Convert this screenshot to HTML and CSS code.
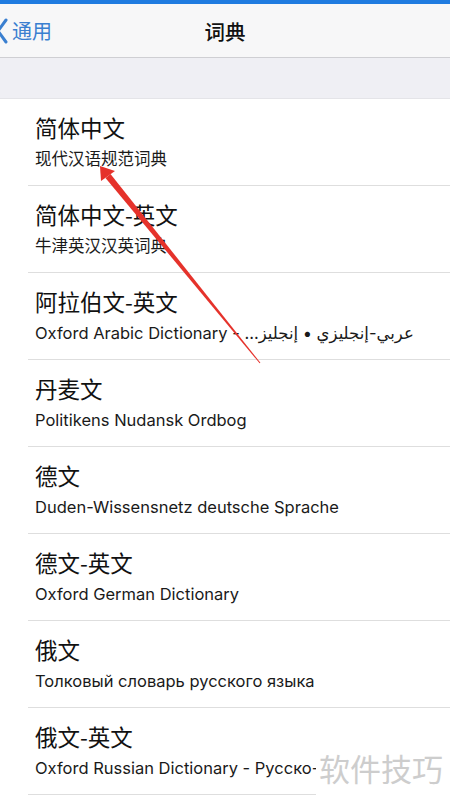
FILE: index.html
```html
<!DOCTYPE html>
<html lang="zh-CN">
<head>
<meta charset="utf-8">
<title>词典</title>
<link rel="stylesheet" href="styles.css">
</head>
<body>
<div class="page">
  <div class="statusbar"></div>
  <header class="nav">
    <div class="back">
      <svg class="chev" width="9" height="26" viewBox="0 0 9 26"><polyline points="6,2 -2,13 6,24" fill="none" stroke="#3a7fd0" stroke-width="3" stroke-linecap="round" stroke-linejoin="round"/></svg>
      <span>通用</span>
    </div>
    <div class="title">词典</div>
  </header>
  <div class="gap"></div>
  <ul class="list">
    <li class="row"><div class="t">简体中文</div><div class="s">现代汉语规范词典</div></li>
    <li class="row"><div class="t">简体中文-英文</div><div class="s">牛津英汉汉英词典</div></li>
    <li class="row"><div class="t">阿拉伯文-英文</div><div class="s">Oxford Arabic Dictionary - عربي-إنجليزي • إنجليز...&#x200F;</div></li>
    <li class="row"><div class="t">丹麦文</div><div class="s">Politikens Nudansk Ordbog</div></li>
    <li class="row"><div class="t">德文</div><div class="s">Duden-Wissensnetz deutsche Sprache</div></li>
    <li class="row"><div class="t">德文-英文</div><div class="s">Oxford German Dictionary</div></li>
    <li class="row"><div class="t">俄文</div><div class="s">Толковый словарь русского языка</div></li>
    <li class="row last"><div class="t">俄文-英文</div><div class="s">Oxford Russian Dictionary - Русско-</div></li>
  </ul>
  <svg class="arrow" width="450" height="801" viewBox="0 0 450 801">
    <polygon points="100,166 101,181 115,171" fill="#e5322b"/>
    <polygon points="110.5,174 105.5,178 259.6,363.3 260.4,362.7" fill="#e5322b"/>
  </svg>
  <div class="watermark">软件技巧</div>
</div>
</body>
</html>
```
FILE: styles.css
```css
* { box-sizing: border-box; }
html, body { margin: 0; padding: 0; background: #fff; }
body {
  font-family: Inter, "Noto Sans CJK SC", "DejaVu Sans", sans-serif;
  color: #111;
  overflow: hidden;
}
.page { position: relative; width: 450px; height: 801px; overflow: hidden; }
.statusbar { height: 4px; background: #1f7be0; }
.nav {
  height: 54px;
  background: #f7f7f8;
  border-bottom: 1px solid #cfcfd3;
  display: flex;
  align-items: center;
  justify-content: center;
  position: relative;
}
.back {
  position: absolute;
  left: 0;
  top: 0;
  bottom: 0;
  display: flex;
  align-items: center;
  gap: 3px;
  color: #3a7fd0;
  font-size: 20px;
  font-family: "Noto Sans CJK SC", sans-serif;
}
.chev { display: block; }
.title {
  font-family: "Noto Sans CJK SC", sans-serif;
  font-size: 20.5px;
  font-weight: 500;
  color: #111;
}
.gap { height: 41px; background: #efeff4; border-bottom: 1px solid #e4e4e8; }
.list { list-style: none; margin: 0; padding: 0; }
.row {
  margin-left: 28px;
  padding-left: 7px;
  height: 87px;
  border-bottom: 1px solid #dedede;
  padding-top: 15px;
  overflow: hidden;
}
.t {
  font-size: 22.5px;
  line-height: 26px;
  font-family: "Noto Sans CJK SC", sans-serif;
  color: #111;
}
.s {
  margin-top: 9px;
  font-size: 16.5px;
  line-height: 20px;
  white-space: nowrap;
  color: #1a1a1a;
}
.arrow { position: absolute; left: 0; top: 0; pointer-events: none; }
.watermark {
  position: absolute;
  left: 316px;
  top: 738px;
  width: 134px;
  height: 63px;
  background: #fff;
  color: #cdcdcd;
  font-family: "Noto Sans CJK SC", sans-serif;
  font-size: 31px;
  line-height: 34px;
  padding-left: 3px;
  padding-top: 13px;
}
```
